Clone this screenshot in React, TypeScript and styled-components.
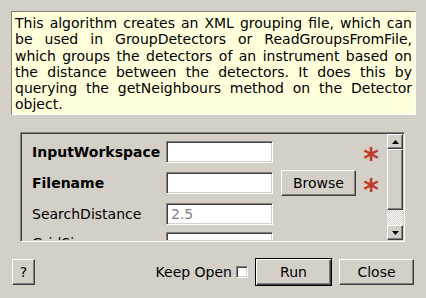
import React from "react";
import styled, { createGlobalStyle, css } from "styled-components";

const GlobalStyle = createGlobalStyle`
  html, body {
    margin: 0;
    padding: 0;
    background: #d4d0c8;
  }
  body {
    font-family: "DejaVu Sans", "Liberation Sans", sans-serif;
    font-size: 14px;
    color: #000;
  }
`;

const sunken = css`
  border: 1px solid;
  border-color: #808080 #ffffff #ffffff #808080;
  box-shadow: inset 1px 1px #404040, inset -1px -1px #d4d0c8;
`;

const raised = css`
  border: 1px solid;
  border-color: #ffffff #404040 #404040 #ffffff;
  box-shadow: inset -1px -1px #808080;
`;

const Dialog = styled.div`
  width: 426px;
  height: 298px;
  display: flex;
  flex-direction: column;
  box-sizing: border-box;
  overflow: hidden;
`;

const Description = styled.div`
  margin: 11px 0 0 11px;
  width: 405px;
  height: 104px;
  box-sizing: border-box;
  padding: 3px 3px 0 3px;
  background: #ffffdc;
  border: 1px solid;
  border-color: #808080 #ffffff #ffffff #808080;
  font-size: 14px;
  line-height: 16.3px;
  text-align: justify;
`;

const Frame = styled.div`
  ${sunken};
  margin: 17px 0 0 20px;
  width: 385px;
  height: 110px;
  box-sizing: border-box;
  display: flex;
  padding: 1px;
`;

const ScrollArea = styled.div`
  flex: 1;
  overflow: hidden;
  padding: 7px 0 0 10px;
`;

const Grid = styled.div`
  display: grid;
  grid-template-columns: 126px 107px 75px 16px;
  column-gap: 8px;
  row-gap: 7px;
  align-items: center;
`;

const Label = styled.div<{ $required?: boolean }>`
  font-weight: ${({ $required }) => ($required ? "bold" : "normal")};
  white-space: nowrap;
  grid-column: 1;
`;

const Input = styled.div<{ $muted?: boolean }>`
  ${sunken};
  grid-column: 2;
  height: 22px;
  box-sizing: border-box;
  background: #fff;
  color: ${({ $muted }) => ($muted ? "#808080" : "#000")};
  padding: 2px 4px;
  line-height: 16px;
`;

const Button = styled.button<{ $default?: boolean; $w: number }>`
  ${raised};
  width: ${({ $w }) => $w}px;
  height: 26px;
  background: #d4d0c8;
  font-family: "DejaVu Sans", "Liberation Sans", sans-serif;
  font-size: 14px;
  color: #000;
  padding: 0;
  margin: 0;
  box-sizing: border-box;
  ${({ $default }) =>
    $default &&
    css`
      height: 28px;
      outline: none;
      border: 1px solid #000;
      box-shadow: inset 1px 1px #ffffff, inset -1px -1px #404040,
        inset -2px -2px #808080;
    `}
`;

const BrowseButton = styled(Button)`
  grid-column: 3;
`;

const Star = styled.div`
  grid-column: 4;
  color: #c0392b;
  font-size: 30px;
  font-weight: bold;
  line-height: 16px;
  height: 16px;
  overflow: visible;
  text-align: center;
  position: relative;
  top: 7px;
  left: -1px;
`;

const ScrollBar = styled.div`
  width: 16px;
  display: flex;
  flex-direction: column;
`;

const ArrowButton = styled.div`
  ${raised};
  height: 15px;
  box-sizing: border-box;
  background: #d4d0c8;
  display: flex;
  align-items: center;
  justify-content: center;
`;

const Thumb = styled.div`
  ${raised};
  height: 61px;
  box-sizing: border-box;
  background: #d4d0c8;
`;

const Track = styled.div`
  flex: 1;
  background-color: #d4d0c8;
  background-image: linear-gradient(45deg, #fff 25%, transparent 25%, transparent 75%, #fff 75%),
    linear-gradient(45deg, #fff 25%, transparent 25%, transparent 75%, #fff 75%);
  background-size: 2px 2px;
  background-position: 0 0, 1px 1px;
`;

const Footer = styled.div`
  display: flex;
  align-items: center;
  margin-top: 16px;
  padding: 0 12px;
  height: 28px;
`;

const Spacer = styled.div`
  flex: 1;
`;

const KeepOpen = styled.span`
  margin-right: 4px;
`;

const CheckBox = styled.div`
  ${sunken};
  width: 12px;
  height: 12px;
  box-sizing: border-box;
  background: #fff;
  margin-right: 7px;
`;

const Gap = styled.div<{ $w: number }>`
  width: ${({ $w }) => $w}px;
`;

const Arrow = ({ up }: { up?: boolean }) => (
  <svg width="7" height="4" viewBox="0 0 7 4">
    <path d={up ? "M0 4 L3.5 0 L7 4 Z" : "M0 0 L3.5 4 L7 0 Z"} fill="#000" />
  </svg>
);

const App: React.FC = () => {
  return (
    <Dialog>
      <GlobalStyle />
      <Description>
        This algorithm creates an XML grouping file, which can be used in
        GroupDetectors or ReadGroupsFromFile, which groups the detectors of an
        instrument based on the distance between the detectors. It does this by
        querying the getNeighbours method on the Detector object.
      </Description>
      <Frame>
        <ScrollArea>
          <Grid>
            <Label $required>InputWorkspace</Label>
            <Input />
            <div />
            <Star>*</Star>

            <Label $required>Filename</Label>
            <Input />
            <BrowseButton $w={75}>Browse</BrowseButton>
            <Star>*</Star>

            <Label>SearchDistance</Label>
            <Input $muted>2.5</Input>
            <div />
            <div />

            <Label>GridSize</Label>
            <Input />
            <div />
            <div />
          </Grid>
        </ScrollArea>
        <ScrollBar>
          <ArrowButton>
            <Arrow up />
          </ArrowButton>
          <Thumb />
          <Track />
          <ArrowButton>
            <Arrow />
          </ArrowButton>
        </ScrollBar>
      </Frame>
      <Footer>
        <Button $w={23}>?</Button>
        <Spacer />
        <KeepOpen>Keep Open</KeepOpen>
        <CheckBox />
        <Button $w={77} $default>
          Run
        </Button>
        <Gap $w={7} />
        <Button $w={75}>Close</Button>
      </Footer>
    </Dialog>
  );
};

export default App;
